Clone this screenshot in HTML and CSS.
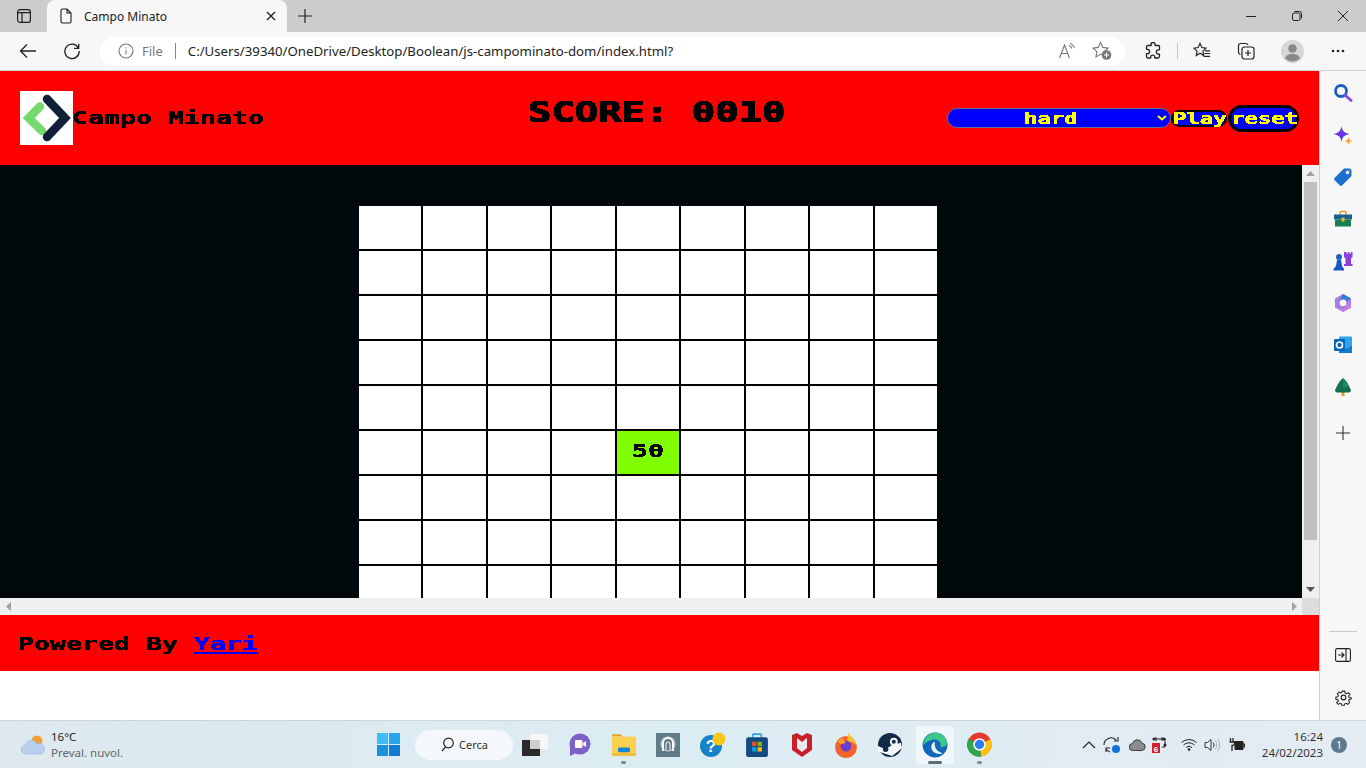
FILE: index.html
```html
<!DOCTYPE html>
<html lang="en">
<head>
<meta charset="utf-8">
<title>Campo Minato</title>
<link rel="stylesheet" href="styles.css">
</head>
<body>
<svg class="defs" width="0" height="0"><filter id="crisp" x="0" y="0" width="100%" height="100%"><feComponentTransfer><feFuncA type="discrete" tableValues="0 1"/></feComponentTransfer></filter></svg>
<div class="screen">
  <div class="tabstrip">
    <div class="strip-btn"><svg width="16" height="16" viewBox="0 0 16 16" fill="none" stroke="#1c1c1c" stroke-width="1.2"><rect x="1.6" y="1.6" width="12.8" height="12.8" rx="2.5"/><path d="M1.6 4.6h12.8M6 4.6v9.8"/></svg></div>
    <div class="tab">
      <svg width="12" height="16" viewBox="0 0 12 16" fill="none" stroke="#1c1c1c" stroke-width="1.1"><path d="M1 2.5A1.5 1.5 0 0 1 2.5 1H7l4 4v8.500A1.500 1.500 0 0 1 9.500 15h-7A1.500 1.500 0 0 1 1 13.500zM7 1v4h4"/></svg>
      <span class="tab-title">Campo Minato</span>
      <svg class="tab-close" width="12" height="12" viewBox="0 0 12 12" fill="none" stroke="#222" stroke-width="1.4"><path d="M2 2l8 8M10 2l-8 8"/></svg>
    </div>
    <div class="strip-new"><svg width="16" height="16" viewBox="0 0 16 16" fill="none" stroke="#222" stroke-width="1.2"><path d="M8 1v14M1 8h14"/></svg></div>
    <div class="winctl">
      <div class="winbtn"><svg width="12" height="12" viewBox="0 0 12 12" stroke="#222" fill="none"><path d="M1 6.500h10"/></svg></div>
      <div class="winbtn"><svg width="12" height="12" viewBox="0 0 12 12" stroke="#222" fill="none"><rect x="1.500" y="3" width="7.500" height="7.500" rx="1.500"/><path d="M3.500 1.500h5a2 2 0 0 1 2 2v5"/></svg></div>
      <div class="winbtn"><svg width="12" height="12" viewBox="0 0 12 12" stroke="#222" fill="none"><path d="M1 1l10 10M11 1L1 11"/></svg></div>
    </div>
  </div>
  <div class="toolbar">
    <div class="tool"><svg width="18" height="16" viewBox="0 0 18 16" fill="none" stroke="#222" stroke-width="1.300"><path d="M17 8H1.500M8 1.500L1.500 8 8 14.500"/></svg></div>
    <div class="tool tool-gap8"><svg width="18" height="18" viewBox="0 0 18 18" fill="none" stroke="#222" stroke-width="1.300"><path d="M15.500 6.200A7.200 7.200 0 1 0 16.200 9M15.700 1.800v4.600h-4.600"/></svg></div>
    <div class="address">
      <svg width="16" height="16" viewBox="0 0 16 16" fill="none" stroke="#777" stroke-width="1.100"><circle cx="8" cy="8" r="7"/><path d="M8 7v4.500M8 4.300v1.200"/></svg>
      <span class="file">File</span>
      <span class="addr-sep"></span>
      <span class="url">C:/Users/39340/OneDrive/Desktop/Boolean/js-campominato-dom/index.html?</span>
      <div class="addr-right">
        <div class="addr-btn"><svg width="18" height="18" viewBox="0 0 18 18" fill="none" stroke="#777" stroke-width="1.100"><path d="M1.500 16L6.500 3l5 13M3.200 11.500h6.600M11 3.500a5 5 0 0 1 3 3M12 1.200a8 8 0 0 1 4.500 4.500"/></svg></div>
        <div class="addr-btn"><svg width="22" height="20" viewBox="0 0 22 20" fill="none" stroke="#777" stroke-width="1.100"><path d="M9.500 1.500l2.300 4.900 5.200.7-3.800 3.700.6 3.500-4.300-1-4.500 2.600.9-5.200L2 7.100l5.200-.7z"/><circle cx="15.500" cy="14" r="4.800" fill="#777" stroke="none"/><path d="M15.500 11.500v5M13 14h5" stroke="#fff"/></svg></div>
      </div>
    </div>
    <div class="tool tool-ext"><svg width="18" height="18" viewBox="0 0 18 18" fill="none" stroke="#222" stroke-width="1.300"><path d="M7 2.500a2 2 0 0 1 4 0c0 .5 0 1 .3 1h3.200c.6 0 1 .4 1 1v3c0 .4-.6.300-1 .3a2.200 2.200 0 0 0 0 4.400c.4 0 1-.1 1 .3v1.800c0 1-.6 1.700-1.500 1.700H11c-.4 0-.3-.5-.3-.9a2 2 0 0 0-4 0c0 .4.100.9-.3.900H4c-.8 0-1.500-.7-1.500-1.500V12c0-.4.500-.3.900-.3a2.200 2.200 0 0 0 0-4.400c-.4 0-.9.100-.9-.3V5c0-.8.700-1.500 1.500-1.500h3c.3 0 .3-.5.300-1z"/></svg></div>
    <span class="tool-sep"></span>
    <div class="tool tool-gap6"><svg width="18" height="18" viewBox="0 0 18 18" fill="none" stroke="#222" stroke-width="1.200"><path d="M7 1.500l1.900 4 4.100.6-3 3 .7 4.400L7 11.300l-3.700 2.200.7-4.400-3-3 4.100-.6zM12 8.800h5M11.500 11.500h5.500M10.500 14.300h6.500"/></svg></div>
    <div class="tool tool-gap8"><svg width="18" height="18" viewBox="0 0 18 18" fill="none" stroke="#222" stroke-width="1.200"><path d="M3.500 12.500A2.500 2.500 0 0 1 1.500 10V3.500a2 2 0 0 1 2-2H9A2.500 2.500 0 0 1 11 3"/><rect x="5" y="5" width="12" height="12" rx="2.500" fill="#f7f7f7"/><path d="M11 8v6M8 11h6"/></svg></div>
    <div class="tool tool-gap10"><svg width="23" height="23" viewBox="0 0 23 23"><circle cx="11.500" cy="11.500" r="11.500" fill="#d6d6d6"/><circle cx="11.500" cy="8.500" r="4.300" fill="#8a8a8a"/><path d="M4 18.500c1-3.500 4-4.500 7.500-4.500s6.500 1 7.500 4.500a11 11 0 0 1-15 0z" fill="#8a8a8a"/></svg></div>
    <div class="tool tool-gap10"><svg width="14" height="4" viewBox="0 0 14 4" fill="#222"><circle cx="2" cy="2" r="1.300"/><circle cx="7" cy="2" r="1.300"/><circle cx="12" cy="2" r="1.300"/></svg></div>
  </div>
  <div class="browser">
    <div class="page">
      <header class="game-header">
        <div class="brand">
          <div class="logo"><svg width="53" height="54" viewBox="0 0 53 54" fill="none" stroke-width="8.500" stroke-linecap="round" stroke-linejoin="miter"><path d="M20 15.500L8.700 27 22 40" stroke="#76d96e"/><path d="M27 8l18 19-18 19" stroke="#0f2038"/></svg></div>
          <h1 class="title"><span class="px px-md w-title">Campo Minato</span></h1>
        </div>
        <div class="score"><span class="px px-lg w-score">SCORE: 0010</span></div>
        <div class="controls">
          <div class="select">
            <span class="px px-sm w-hard">hard</span>
            <svg class="chev" width="10" height="6" viewBox="0 0 10 6" fill="none" stroke="#ff0" stroke-width="2"><path d="M1 1l4 3.500L9 1"/></svg>
          </div>
          <button class="btn btn-play"><span class="px px-sm w-play">Play</span></button>
          <button class="btn btn-reset"><span class="px px-sm w-reset">reset</span></button>
        </div>
      </header>
      <div class="viewport">
        <main class="board-area">
          <div class="board">
            <div class="cell"></div><div class="cell"></div><div class="cell"></div><div class="cell"></div><div class="cell"></div><div class="cell"></div><div class="cell"></div><div class="cell"></div><div class="cell"></div>
            <div class="cell"></div><div class="cell"></div><div class="cell"></div><div class="cell"></div><div class="cell"></div><div class="cell"></div><div class="cell"></div><div class="cell"></div><div class="cell"></div>
            <div class="cell"></div><div class="cell"></div><div class="cell"></div><div class="cell"></div><div class="cell"></div><div class="cell"></div><div class="cell"></div><div class="cell"></div><div class="cell"></div>
            <div class="cell"></div><div class="cell"></div><div class="cell"></div><div class="cell"></div><div class="cell"></div><div class="cell"></div><div class="cell"></div><div class="cell"></div><div class="cell"></div>
            <div class="cell"></div><div class="cell"></div><div class="cell"></div><div class="cell"></div><div class="cell"></div><div class="cell"></div><div class="cell"></div><div class="cell"></div><div class="cell"></div>
            <div class="cell"></div><div class="cell"></div><div class="cell"></div><div class="cell"></div><div class="cell safe"><span class="px px-md w-num">50</span></div><div class="cell"></div><div class="cell"></div><div class="cell"></div><div class="cell"></div>
            <div class="cell"></div><div class="cell"></div><div class="cell"></div><div class="cell"></div><div class="cell"></div><div class="cell"></div><div class="cell"></div><div class="cell"></div><div class="cell"></div>
            <div class="cell"></div><div class="cell"></div><div class="cell"></div><div class="cell"></div><div class="cell"></div><div class="cell"></div><div class="cell"></div><div class="cell"></div><div class="cell"></div>
            <div class="cell"></div><div class="cell"></div><div class="cell"></div><div class="cell"></div><div class="cell"></div><div class="cell"></div><div class="cell"></div><div class="cell"></div><div class="cell"></div>
          </div>
        </main>
        <div class="vscroll">
          <div class="arrow-box"><svg width="9" height="5" viewBox="0 0 9 5" fill="#a0a0a0"><path d="M4.500 0L9 5H0z"/></svg></div>
          <div class="vthumb"></div>
          <div class="arrow-box arrow-bottom"><svg width="9" height="5" viewBox="0 0 9 5" fill="#555"><path d="M0 0h9L4.500 5z"/></svg></div>
        </div>
      </div>
      <div class="hscroll">
        <svg width="5" height="9" viewBox="0 0 5 9" fill="#a0a0a0"><path d="M5 0v9L0 4.500z"/></svg>
        <svg class="harrow-r" width="5" height="9" viewBox="0 0 5 9" fill="#a0a0a0"><path d="M0 0v9l5-4.500z"/></svg>
        <div class="corner"></div>
      </div>
      <footer class="game-footer"><span class="px px-md w-foot">Powered By <a href="#">Yari</a></span></footer>
      <div class="page-rest"></div>
    </div>
    <aside class="sidebar">
      <div class="side-item"><svg width="20" height="20" viewBox="0 0 20 20" fill="none"><circle cx="8" cy="8" r="5.500" stroke="#1a5fc8" stroke-width="2.800"/><path d="M12.500 12.500l5.500 5" stroke="#8a4fd8" stroke-width="3" stroke-linecap="round"/></svg></div>
      <div class="side-item side-spark"><svg width="20" height="20" viewBox="0 0 20 20"><path d="M8.500 0c.8 5 2.700 7 8 8-5.300 1-7.200 3-8 8-.8-5-2.700-7-8-8 5.300-1 7.200-3 8-8z" fill="#6a35e0"/><path d="M15.500 11c.4 2.500 1.200 3.300 4 4-2.800.7-3.600 1.500-4 4-.4-2.500-1.200-3.300-4-4 2.800-.7 3.600-1.500 4-4z" fill="#f5a623"/></svg></div>
      <div class="side-item"><svg width="20" height="20" viewBox="0 0 20 20"><path d="M11 1.500h6a1.500 1.500 0 0 1 1.500 1.500v6L9 18.500a1.500 1.500 0 0 1-2 0L1.500 13a1.500 1.500 0 0 1 0-2z" fill="#1a6fd0"/><circle cx="14.500" cy="5.500" r="1.700" fill="#fff"/><path d="M14.500 5.500l3-3" stroke="#f5c04a"/></svg></div>
      <div class="side-item"><svg width="20" height="18" viewBox="0 0 20 18"><path d="M7 5V2.500A1 1 0 0 1 8 1.500h4a1 1 0 0 1 1 1V5" fill="none" stroke="#e8a020" stroke-width="1.500"/><rect x="1" y="4.500" width="18" height="5" fill="#17608f"/><rect x="2" y="9.500" width="16" height="7" fill="#16804f"/><rect x="8.500" y="7.500" width="3" height="4" fill="#f0b030"/></svg></div>
      <div class="side-item"><svg width="20" height="20" viewBox="0 0 20 20"><path d="M12 1h1.500v1.500H15V1h1.500v1.500H18V1h1.500v5L18 7.500V13h1.500v2H11v-2h1.500V7.500L11 6V1z" fill="#8a3fd8"/><circle cx="6" cy="6" r="3" fill="#1a5fc8"/><path d="M4 9h4l1 6 2 3v1.500H0.500V18l2.500-3z" fill="#1557c0"/></svg></div>
      <div class="side-item"><svg width="20" height="20" viewBox="0 0 20 20"><path d="M10 1l8 4.500v9L10 19l-8-4.500v-9z" fill="#a47de0"/><path d="M10 1l8 4.500-4 2.500a5 5 0 0 0-7-1z" fill="#2a7fd8"/><path d="M18 9v5.500L10 19l-4-3c4 1 7-1 8-5z" fill="#c47fe0"/><circle cx="10" cy="10" r="3.300" fill="#f7f7f7"/></svg></div>
      <div class="side-item"><svg width="20" height="20" viewBox="0 0 20 20"><rect x="6" y="1.500" width="13" height="16" rx="1" fill="#28a8ea"/><path d="M6 11l6.500 3 6.500-3v7H6z" fill="#0f7cd0"/><rect x="1" y="4" width="11" height="12" rx="1" fill="#0a64b8"/><circle cx="6.500" cy="10" r="3" fill="none" stroke="#fff" stroke-width="1.700"/></svg></div>
      <div class="side-item"><svg width="20" height="20" viewBox="0 0 20 20"><rect x="8.500" y="14" width="3" height="5" fill="#e89a20"/><path d="M10 1l3 3 1 1.500 2 3.500 2 4c0 1.500-1 2.500-2 2.500H4c-1 0-2-1-2-2.500l2-4 2-3.500 1-1.500z" fill="#12704f"/><path d="M10 1l4 4.500 2 3.500-6 2z" fill="#1c8a68"/></svg></div>
      <div class="side-item side-plus"><svg width="14" height="14" viewBox="0 0 14 14" stroke="#333" stroke-width="1.100"><path d="M7 0v14M0 7h14"/></svg></div>
      <div class="side-spacer"></div>
      <div class="side-div"></div>
      <div class="side-item side-panel"><svg width="16" height="14" viewBox="0 0 16 14" fill="none" stroke="#222" stroke-width="1.100"><rect x=".6" y=".6" width="14.800" height="12.800" rx="1.500"/><path d="M11 .6v12.800M3 7h5.500M6.500 4.500L9 7l-2.500 2.500"/></svg></div>
      <div class="side-item side-gear"><svg width="17" height="17" viewBox="0 0 24 24" fill="none" stroke="#222" stroke-width="1.600"><circle cx="12" cy="12" r="3.300"/><path d="M10 2h4l.6 3 2.300 1 2.600-1.700 2.800 2.800L20 9.700l1 2.300 3 .6v-1 2.800l-3 .6-1 2.300 1.700 2.600-2.800 2.800-2.600-1.700-2.300 1-.6 2h-4l-.6-2-2.300-1-2.600 1.700-2.800-2.800L4 17.700l-1-2.300-3-.6v-3.200l3-.6 1-2.300-1.700-2.600 2.800-2.800L7 5l2.300-1z" transform="translate(1.200 1.200) scale(.9)"/></svg></div>
    </aside>
  </div>
  <div class="taskbar">
    <div class="weather">
      <svg width="26" height="24" viewBox="0 0 26 24"><circle cx="17" cy="8" r="5.500" fill="#f0a030"/><path d="M6 21a4.500 4.500 0 0 1-.5-9 6 6 0 0 1 11.300-1.200A5 5 0 0 1 21 21z" fill="#b9d0ef" stroke="#8fb0e0" stroke-width=".6"/></svg>
      <div class="weather-text"><span class="temp">16°C</span><span class="cond">Preval. nuvol.</span></div>
    </div>
    <div class="winlogo"><svg width="23" height="23" viewBox="0 0 23 23"><rect width="11" height="11" fill="#3fbdf5"/><rect x="12" width="11" height="11" fill="#28a6ec"/><rect y="12" width="11" height="11" fill="#1a90e0"/><rect x="12" y="12" width="11" height="11" fill="#0f7cd2"/></svg></div>
    <div class="search"><svg width="13" height="15" viewBox="0 0 13 15" fill="none" stroke="#222" stroke-width="1.200"><circle cx="7.500" cy="6" r="4.800"/><path d="M4.500 10L1 14"/></svg><span>Cerca</span></div>
    <div class="dock">
      <div class="dock-item"><svg width="26" height="22" viewBox="0 0 26 22"><rect x="8" y="0" width="18" height="15" fill="#f6f6f6"/><rect x="0" y="6" width="18" height="16" fill="#2a2a2a"/><rect x="8" y="6" width="10" height="9" fill="#cfcfcf"/></svg></div>
      <div class="dock-item"><svg width="22" height="24" viewBox="0 0 22 24"><circle cx="11" cy="11" r="10.500" fill="#7a63c8"/><path d="M1 14l0 9 6-3z" fill="#7a63c8"/><rect x="6" y="7" width="7.500" height="8" rx="1" fill="#fff"/><path d="M14 10l3-2v6l-3-2z" fill="#fff"/></svg></div>
      <div class="dock-item dock-open"><svg width="26" height="24" viewBox="0 0 20 20"><path d="M0 2a1 1 0 0 1 1-1h6l2 2H0z" fill="#e0a020"/><rect y="3" width="20" height="15" fill="#fad14f"/><rect x="5" y="12" width="10" height="4" rx="1" fill="#1583d8"/><rect y="17" width="20" height="2" fill="#f0b830"/></svg></div>
      <div class="dock-item"><svg width="24" height="24" viewBox="0 0 24 24"><rect width="24" height="24" fill="#5f7a88"/><path d="M7 18V10a5 5 0 0 1 10 0v8" fill="none" stroke="#fff" stroke-width="2"/><path d="M10 17v-6a2 2 0 0 1 4 0v6" fill="none" stroke="#fff"/><circle cx="12" cy="11" r="7" fill="none" stroke="#dfe6ea"/></svg></div>
      <div class="dock-item"><svg width="28" height="26" viewBox="0 0 28 26"><circle cx="12" cy="14" r="11" fill="#1583c8"/><text x="12" y="20" class="qm">?</text><circle cx="20" cy="7" r="6.500" fill="#fbc51a"/></svg></div>
      <div class="dock-item"><svg width="22" height="24" viewBox="0 0 20 22"><path d="M6 4V2a1 1 0 0 1 1-1h6a1 1 0 0 1 1 1v2" fill="none" stroke="#2ca0e8" stroke-width="1.500"/><rect y="4" width="20" height="18" rx="2" fill="#134a80"/><rect x="5.500" y="8" width="4" height="4" fill="#f25022"/><rect x="10.500" y="8" width="4" height="4" fill="#7fba00"/><rect x="5.500" y="13" width="4" height="4" fill="#00a4ef"/><rect x="10.500" y="13" width="4" height="4" fill="#ffb900"/></svg></div>
      <div class="dock-item"><svg width="20" height="24" viewBox="0 0 20 24"><path d="M0 2l5-2 5 3 5-3 5 2v15l-10 7-10-7z" fill="#c8202a"/><path d="M5 5l5 4 5-4v10l-5 4-5-4z" fill="#e8ebee"/></svg></div>
      <div class="dock-item"><svg width="26" height="26" viewBox="0 0 24 24"><circle cx="12" cy="14" r="10" fill="#f0632a"/><path d="M14 1c2 3 6 5 8 11-3-2-6-4-9-3z" fill="#fbc02d"/><circle cx="12" cy="13" r="5" fill="#6a3fd0"/><path d="M4 8c3 5 7 3 8 1-2 0-3-2-3-4z" fill="#ffa02a"/></svg></div>
      <div class="dock-item"><svg width="24" height="24" viewBox="0 0 22 22"><circle cx="11" cy="11" r="11" fill="#112a4a"/><path d="M0 12l7 3 6-4 8-2 1 5-9 7-13-4z" fill="#f4f6f8"/><circle cx="14.500" cy="8" r="3.600" fill="#f4f6f8"/><circle cx="14.500" cy="8" r="1.800" fill="#112a4a"/><circle cx="7" cy="15" r="2.500" fill="#112a4a"/></svg></div>
      <div class="dock-item dock-active"><svg width="26" height="26" viewBox="0 0 24 24"><circle cx="12" cy="12" r="11.500" fill="#1268b8"/><path d="M1 12C2 4 8 .5 12 .5c6 0 11 4.500 11 9.500 0 3-3 4.500-6 3.500 1-4-2-7-6-6.500-5 .5-9 4-10 5z" fill="#3bc88a"/><path d="M12 9c-3 1-4 4-3 7s5 5 9 4-8-.5-6-11z" fill="#e8f4f8"/></svg></div>
      <div class="dock-item dock-open"><svg width="25" height="25" viewBox="0 0 24 24"><circle cx="12" cy="12" r="11.500" fill="#e33b2e"/><path d="M12 12L22.500 7a11.500 11.500 0 0 1-9 16.500z" fill="#fbc116"/><path d="M12 12l1.500 11.500A11.500 11.500 0 0 1 1.500 6.500z" fill="#2ea64f"/><circle cx="12" cy="12" r="6" fill="#fff"/><circle cx="12" cy="12" r="4.500" fill="#2e7cf0"/></svg></div>
    </div>
    <div class="tray">
      <svg class="t-caret" width="14" height="8" viewBox="0 0 14 8" fill="none" stroke="#222" stroke-width="1.200"><path d="M1 7l6-6 6 6"/></svg>
      <svg class="t-sync" width="18" height="18" viewBox="0 0 18 18"><path d="M1 9a7 7 0 0 1 12-5M15 1v4h-4M3 16v-4h4M3 13a7 7 0 0 0 4 3" fill="none" stroke="#222" stroke-width="1.100"/><circle cx="13" cy="13" r="4" fill="#0f70d8"/></svg>
      <svg class="t-cloud" width="17" height="12" viewBox="0 0 17 12"><path d="M4 11.500a3.500 3.500 0 0 1-.5-7A5 5 0 0 1 13 4a3.800 3.800 0 0 1 0 7.500z" fill="#8c8c8c" stroke="#222" stroke-width=".8"/></svg>
      <svg class="t-red" width="17" height="16" viewBox="0 0 17 16"><rect y="6" width="8" height="10" fill="#d8202a"/><text x="4" y="15" class="red-num">6</text><path d="M2 2h12M4 0v4h0M10 0v4M13 2v8h-3" stroke="#222" fill="none"/><circle cx="2" cy="2" r="1.500" fill="#222"/><circle cx="12" cy="2" r="1.500" fill="#222"/><circle cx="13" cy="8" r="1.500" fill="#222"/></svg>
      <svg class="t-wifi" width="16" height="13" viewBox="0 0 16 13" fill="none" stroke="#222" stroke-width="1"><path d="M.5 4.500a11 11 0 0 1 15 0M2.500 7a8 8 0 0 1 11 0M5 9.500a4.500 4.500 0 0 1 6 0"/><circle cx="8" cy="11.500" r=".9" fill="#222"/></svg>
      <svg class="t-vol" width="17" height="14" viewBox="0 0 17 14" fill="none" stroke="#222" stroke-width=".9"><path d="M1 4.500h2.500L7 1.500v11l-3.500-3H1zM9 4.500a3.500 3.500 0 0 1 0 5"/><path d="M11 2.500a6.500 6.500 0 0 1 0 9M13.500 1a9 9 0 0 1 0 12" stroke="#aaa"/></svg>
      <svg class="t-batt" width="16" height="13" viewBox="0 0 16 13"><path d="M1.500 0v4M4 0v4M.5 4h5v1.500a2.200 2.200 0 0 1-2.500 2V13" fill="none" stroke="#222" stroke-width="1.300"/><rect x="5.500" y="3" width="9" height="9" rx="1" fill="#222"/><rect x="14.500" y="5.500" width="1.500" height="4" fill="#222"/></svg>
      <div class="clock"><span>16:24</span><span>24/02/2023</span></div>
      <div class="badge">1</div>
    </div>
  </div>
</div>
</body>
</html>
```
FILE: styles.css
```css
* { box-sizing: border-box; }
html, body { margin: 0; padding: 0; height: 100%; overflow: hidden; }
body { font-family: "Noto Sans", "Open Sans", sans-serif; color: #222; }
.defs { position: absolute; }
.screen { width: 1366px; height: 768px; display: flex; flex-direction: column; }

/* tab strip */
.tabstrip { height: 32px; background: #cccccc; display: flex; align-items: stretch; }
.strip-btn { width: 47px; display: flex; align-items: center; justify-content: center; }
.tab { width: 240px; background: #f7f7f7; border-radius: 8px 8px 0 0; display: flex; align-items: center; padding: 0 10px 0 13px; }
.tab-title { margin-left: 12px; font-size: 12px; color: #222; }
.tab-close { margin-left: auto; }
.strip-new { width: 36px; display: flex; align-items: center; justify-content: center; }
.winctl { margin-left: auto; display: flex; }
.winbtn { width: 46px; display: flex; align-items: center; justify-content: center; }

/* toolbar */
.toolbar { height: 39px; background: #f7f7f7; border-bottom: 1px solid #d4d4d4; display: flex; align-items: center; padding-left: 10px; }
.tool { width: 36px; height: 30px; flex: none; display: flex; align-items: center; justify-content: center; }
.tool-gap8 { margin-left: 8px; }
.tool-gap6 { margin-left: 6px; }
.tool-gap10 { margin-left: 10px; }
.tool-ext { margin-left: 10px; }
.tool-sep { width: 1px; height: 16px; background: #c4c4c4; margin-left: 6px; flex: none; }
.address { width: 1025px; height: 29px; margin-left: 10px; flex: none; background: #fff; border-radius: 15px; display: flex; align-items: center; padding-left: 18px; font-size: 13px; }
.file { margin-left: 8px; color: #777; font-size: 13px; }
.addr-sep { width: 1px; height: 16px; background: #888; margin-left: 12px; }
.url { margin-left: 12px; color: #222; font-size: 13.230px; white-space: nowrap; }
.addr-right { margin-left: auto; display: flex; gap: 11px; padding-right: 11px; }
.addr-btn { width: 24px; display: flex; align-items: center; justify-content: center; }

/* page */
.browser { height: 649px; display: flex; }
.page { width: 1319px; display: flex; flex-direction: column; background: #fff; }
.px { display: inline-block; transform-origin: left center; white-space: nowrap; font-family: "DejaVu Sans Mono", "Liberation Mono", monospace; font-weight: 700; text-align: left; filter: url(#crisp); }
.px-lg { font-size: 29px; line-height: 36px; transform: scaleX(1.34); -webkit-text-stroke: 1.2px #000; }
.px-md { font-size: 18px; line-height: 24px; transform: scaleX(1.476); -webkit-text-stroke: .4px currentColor; }
.px-sm { font-size: 16px; line-height: 18px; transform: scaleX(1.39); margin-top: 2px; -webkit-text-stroke: .3px currentColor; }
.w-title { width: 192px; }
.w-score { width: 258px; }
.w-hard { width: 54px; }
.w-play { width: 54px; }
.w-reset { width: 67px; }
.w-num { width: 32px; margin-top: -3px; }
.w-foot { width: 240px; margin-top: 2px; }

.game-header { height: 94px; background: #ff0000; display: flex; align-items: center; padding: 0 20px; color: #000; }
.brand { display: flex; align-items: center; }
.logo { width: 53px; height: 54px; background: #fff; display: flex; }
.title { margin: 0 0 0 -1px; font: inherit; }
.score { margin-left: 264px; margin-top: -12px; }
.controls { margin-left: auto; display: flex; align-items: center; }
.select { width: 224px; height: 20px; background: #0000ff; border: 1px solid #6a6a8a; border-radius: 10px; color: #ffff00; display: flex; align-items: center; padding-left: 76px; position: relative; }
.chev { position: absolute; right: 3px; top: 6px; }
.btn { padding: 0; margin: 0; background: #0000ff; color: #ffff00; display: flex; align-items: center; justify-content: center; font: inherit; }
.btn-play { width: 56px; height: 17px; margin-left: 0; border: 2px solid #000; border-radius: 9px; }
.btn-reset { width: 71px; height: 27px; margin-left: 1px; border: 3px solid #000; border-radius: 14px; }

.viewport { height: 433px; display: flex; }
.board-area { width: 1302px; background: #00080c; overflow: hidden; padding: 41px 0 0 359px; }
.board { width: 578px; display: grid; grid-template-columns: repeat(9, 1fr); grid-auto-rows: 43px; gap: 2px; background: #000; }
.cell { background: #fff; display: flex; align-items: center; justify-content: center; }
.safe { background: #80ff00; color: #000; }
.vscroll { width: 17px; background: #f0f0f0; display: flex; flex-direction: column; align-items: center; }
.arrow-box { height: 17px; flex: none; display: flex; align-items: center; justify-content: center; }
.vthumb { width: 13px; height: 358px; background: #c0c0c0; }
.arrow-bottom { margin-top: auto; }
.hscroll { height: 17px; flex: none; background: #f0f0f0; display: flex; align-items: center; padding-left: 6px; }
.harrow-r { margin-left: auto; margin-right: 5px; }
.corner { width: 17px; height: 17px; background: #dcdcdc; flex: none; }

.game-footer { height: 56px; flex: none; background: #ff0000; color: #000; display: flex; align-items: center; padding-left: 18px; }
.game-footer a { color: #0000ff; text-decoration: underline; text-decoration-thickness: 2px; text-underline-offset: 2px; text-decoration-skip-ink: none; }
.page-rest { flex: 1; background: #fff; }

/* sidebar */
.sidebar { width: 47px; background: #f7f7f7; border-left: 1px solid #cfcfcf; display: flex; flex-direction: column; align-items: center; }
.side-item { height: 42px; flex: none; width: 100%; display: flex; align-items: center; justify-content: center; }
.side-item:first-child { margin-top: 1px; }
.side-spark svg { margin-top: 2px; }
.side-plus { margin-top: 4px; }
.side-spacer { flex: 1; }
.side-div { width: 28px; height: 1px; background: #c8c8c8; margin-bottom: 2px; }
.side-panel { height: 42px; }
.side-gear { height: 42px; margin-bottom: 2px; }

/* taskbar */
.taskbar { height: 48px; background: linear-gradient(90deg, #dde9ef 0%, #dcecf3 50%, #e4ebf3 100%); border-top: 1px solid #ccd6dc; display: flex; align-items: center; position: relative; }
.weather { width: 377px; flex: none; display: flex; align-items: center; padding-left: 20px; gap: 5px; }
.weather-text { display: flex; flex-direction: column; font-size: 11.500px; line-height: 16px; }
.temp { color: #222; }
.cond { color: #666; }
.winlogo { width: 23px; height: 23px; flex: none; display: flex; }
.search { width: 98px; height: 30px; margin-left: 15px; flex: none; background: #f5f8fb; border-radius: 15px; display: flex; align-items: center; padding-left: 26px; gap: 5px; font-size: 11px; color: #333; }
.dock { display: flex; margin-left: 0; align-items: center; }
.dock-item { width: 44.400px; height: 38px; display: flex; align-items: center; justify-content: center; position: relative; flex: none; }
.dock-open::after, .dock-active::after { content: ""; position: absolute; bottom: 0; left: 50%; width: 5px; height: 3px; margin-left: -2.500px; border-radius: 2px; background: #7b8a94; }
.dock-active { background: rgba(255,255,255,.55); border-radius: 4px; width: 38px; margin: 0 3.200px; }
.dock-active::after { width: 14px; margin-left: -7px; background: #5c6b75; }
.qm { font: 700 17px "Liberation Sans", sans-serif; fill: #fff; text-anchor: middle; }
.red-num { font: 700 8px "Liberation Sans", sans-serif; fill: #fff; text-anchor: middle; }
.tray { margin-left: auto; display: flex; align-items: center; padding-right: 19px; height: 100%; }
.t-sync { margin-left: 7px; }
.t-cloud { margin-left: 8px; }
.t-red { margin-left: 6px; }
.t-wifi { margin-left: 12px; }
.t-vol { margin-left: 7px; }
.t-batt { margin-left: 8px; }
.clock { width: 77px; margin-left: 1px; display: flex; flex-direction: column; align-items: flex-end; font-size: 11.500px; line-height: 16px; color: #333; }
.badge { width: 16px; height: 16px; margin-left: 8px; border-radius: 50%; background: #5b7a8f; color: #fff; font-size: 10px; display: flex; align-items: center; justify-content: center; }
```
